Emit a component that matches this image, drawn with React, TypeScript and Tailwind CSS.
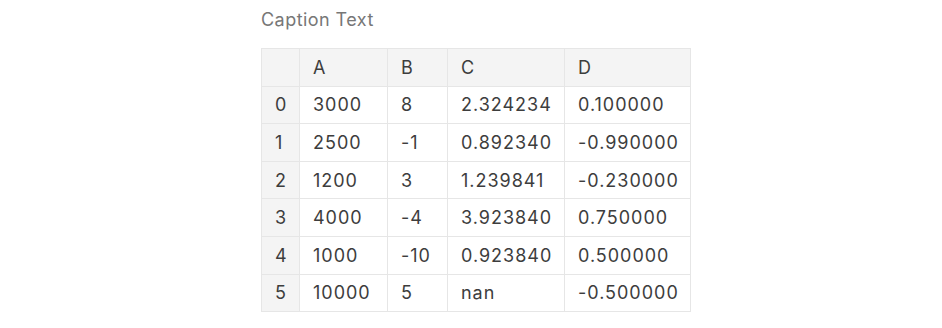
import React from 'react';

const columns = ['A', 'B', 'C', 'D'];

const rows: [string, string, string, string, string][] = [
  ['0', '3000', '8', '2.324234', '0.100000'],
  ['1', '2500', '-1', '0.892340', '-0.990000'],
  ['2', '1200', '3', '1.239841', '-0.230000'],
  ['3', '4000', '-4', '3.923840', '0.750000'],
  ['4', '1000', '-10', '0.923840', '0.500000'],
  ['5', '10000', '5', 'nan', '-0.500000'],
];

const cell = 'h-[37.6px] border border-[#e6e6e6] px-[13px] text-left font-normal whitespace-nowrap';

export default function App() {
  return (
    <div className="min-h-screen bg-white pl-[261px] pt-[8px] font-['Inter',sans-serif] text-[#3d3d3d]">
      <table className="w-[429px] table-fixed border-collapse text-[18px] tracking-[0.055em]">
        <caption className="pb-[16px] text-left text-[18px] leading-[24px] tracking-[0.025em] text-[#777777]">
          Caption Text
        </caption>
        <colgroup>
          <col className="w-[38px]" />
          <col className="w-[88px]" />
          <col className="w-[60px]" />
          <col className="w-[117px]" />
          <col className="w-[126px]" />
        </colgroup>
        <thead>
          <tr className="bg-[#f4f4f4]">
            <th className={cell}></th>
            {columns.map((c) => (
              <th key={c} className={cell}>
                {c}
              </th>
            ))}
          </tr>
        </thead>
        <tbody>
          {rows.map((r) => (
            <tr key={r[0]}>
              <th className={`${cell} bg-[#f4f4f4]`}>{r[0]}</th>
              {r.slice(1).map((v, i) => (
                <td key={i} className={cell}>
                  {v}
                </td>
              ))}
            </tr>
          ))}
        </tbody>
      </table>
    </div>
  );
}
